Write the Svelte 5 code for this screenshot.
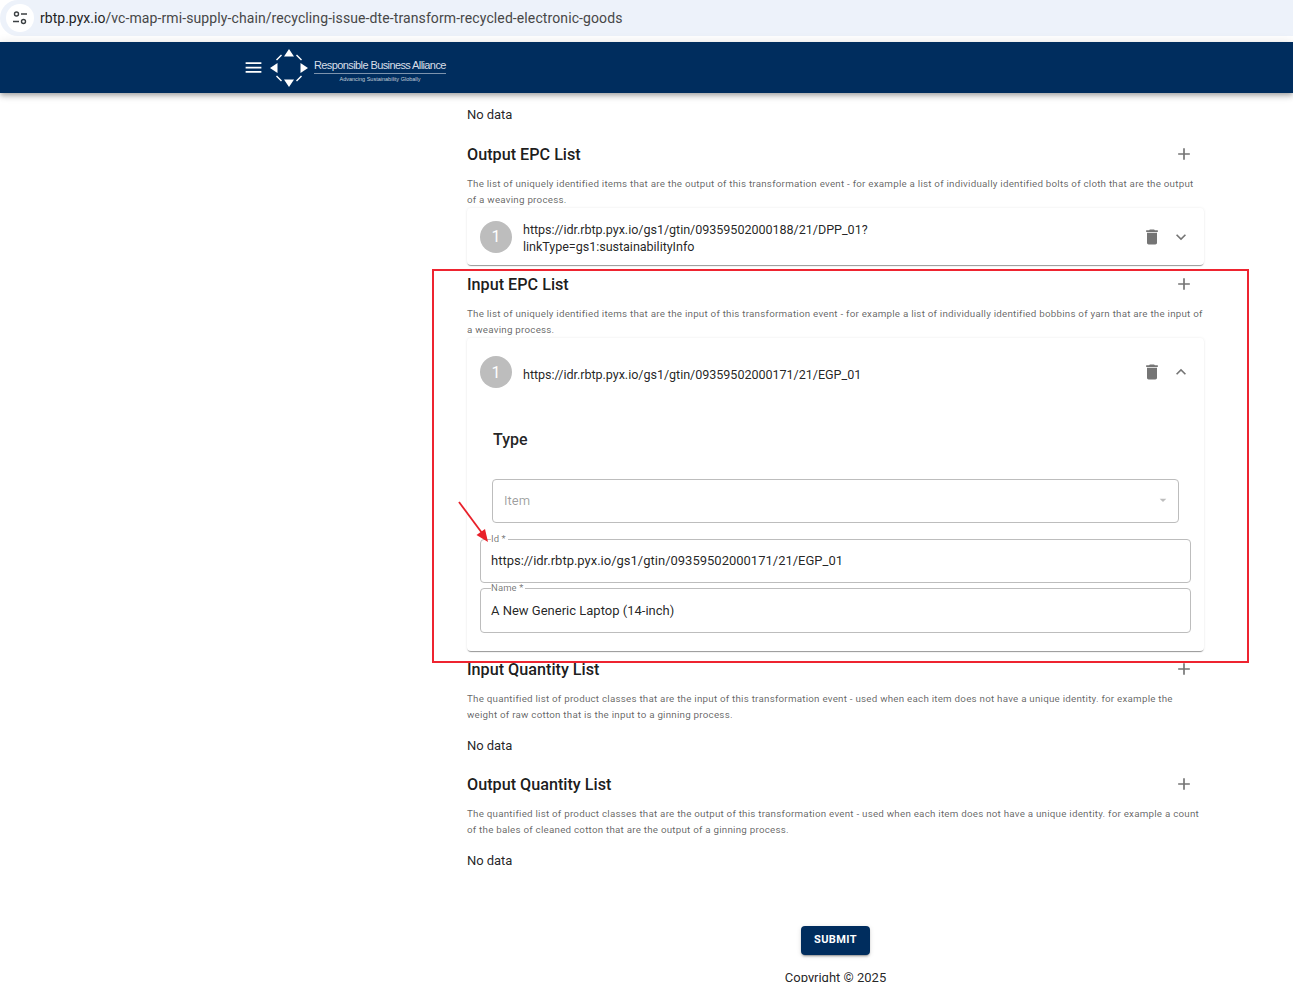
<script>
  const trash = "M6 19c0 1.1.9 2 2 2h8c1.1 0 2-.9 2-2V7H6v12zM19 4h-3.5l-1-1h-5l-1 1H5v2h14V4z";
  const plus = "M19 13h-6v6h-2v-6H5v-2h6V5h2v6h6v2z";
</script>

<div class="page">
  <div class="urlbar">
    <div class="tune">
      <svg width="16" height="16" viewBox="0 0 16 16" fill="none" stroke="#3c4043" stroke-width="1.4">
        <circle cx="4.5" cy="4" r="2"/><path d="M9 4h6M1 11.5h6"/><circle cx="11.5" cy="11.5" r="2"/>
      </svg>
    </div>
    <div class="url"><span class="host">rbtp.pyx.io</span><span class="path">/vc-map-rmi-supply-chain/recycling-issue-dte-transform-recycled-electronic-goods</span></div>
  </div>

  <header class="topbar">
    <svg class="menu" width="21" height="21" viewBox="0 0 24 24" fill="#fff"><path d="M3 18h18v-2H3v2zm0-5h18v-2H3v2zm0-7v2h18V6H3z"/></svg>
    <svg class="mark" width="40" height="40" viewBox="0 0 40 40" fill="#fff">
      <path d="M20 1l5 7.5H15zM20 39l-5-7.500h10zM1 20l7.500-5v10zM39 20l-7.500 5V15z"/>
      <path d="M7 11.500l5-5 1 1-5 5zM33 11.500l-5-5-1 1 5 5zM7 28.500l5 5 1-1-5-5zM33 28.500l-5 5-1-1 5-5z"/>
    </svg>
    <div class="brand">
      <div class="brand-name">Responsible Business Alliance</div>
      <div class="brand-tag">Advancing Sustainability Globally</div>
    </div>
  </header>

  <main class="content">
    <p class="nodata first">No data</p>

    <section class="sec output">
      <div class="sec-head">
        <h2>Output EPC List</h2>
        <svg class="add" viewBox="0 0 24 24"><path d={plus}/></svg>
      </div>
      <p class="desc">The list of uniquely identified items that are the output of this transformation event - for example a list of individually identified bolts of cloth that are the output of a weaving process.</p>
      <div class="card">
        <div class="row">
          <div class="num">1</div>
          <div class="row-text">https://idr.rbtp.pyx.io/gs1/gtin/09359502000188/21/DPP_01?<br/>linkType=gs1:sustainabilityInfo</div>
          <svg class="trash" viewBox="0 0 24 24"><path d={trash}/></svg>
          <svg class="chev" viewBox="0 0 24 24"><path d="M16.590 8.590 12 13.170 7.410 8.590 6 10l6 6 6-6z"/></svg>
        </div>
      </div>
    </section>

    <section class="sec input">
      <div class="sec-head">
        <h2>Input EPC List</h2>
        <svg class="add" viewBox="0 0 24 24"><path d={plus}/></svg>
      </div>
      <p class="desc">The list of uniquely identified items that are the input of this transformation event - for example a list of individually identified bobbins of yarn that are the input of a weaving process.</p>
      <div class="card open">
        <div class="row tall">
          <div class="num">1</div>
          <div class="row-text">https://idr.rbtp.pyx.io/gs1/gtin/09359502000171/21/EGP_01</div>
          <svg class="trash" viewBox="0 0 24 24"><path d={trash}/></svg>
          <svg class="chev" viewBox="0 0 24 24"><path d="M12 8l-6 6 1.410 1.410L12 10.830l4.590 4.580L18 14z"/></svg>
        </div>
        <div class="details">
          <h3>Type</h3>
          <div class="select">
            <span>Item</span>
            <svg viewBox="0 0 24 24"><path d="M7 10l5 5 5-5z"/></svg>
          </div>
          <fieldset class="field id">
            <legend>Id *</legend>
            <div class="value">https://idr.rbtp.pyx.io/gs1/gtin/09359502000171/21/EGP_01</div>
          </fieldset>
          <fieldset class="field name">
            <legend>Name *</legend>
            <div class="value">A New Generic Laptop (14-inch)</div>
          </fieldset>
        </div>
      </div>
    </section>

    <section class="sec qty-in">
      <div class="sec-head">
        <h2>Input Quantity List</h2>
        <svg class="add" viewBox="0 0 24 24"><path d={plus}/></svg>
      </div>
      <p class="desc">The quantified list of product classes that are the input of this transformation event - used when each item does not have a unique identity. for example the weight of raw cotton that is the input to a ginning process.</p>
      <p class="nodata">No data</p>
    </section>

    <section class="sec qty-out">
      <div class="sec-head">
        <h2>Output Quantity List</h2>
        <svg class="add" viewBox="0 0 24 24"><path d={plus}/></svg>
      </div>
      <p class="desc">The quantified list of product classes that are the output of this transformation event - used when each item does not have a unique identity. for example a count of the bales of cleaned cotton that are the output of a ginning process.</p>
      <p class="nodata">No data</p>
    </section>

    <div class="actions"><button>SUBMIT</button></div>
    <div class="copyright">Copyright © 2025</div>
  </main>

  <div class="red-box"></div>
  <svg class="arrow" width="40" height="50" viewBox="0 0 40 50">
    <path d="M2 2 L25 33" stroke="#e8202a" stroke-width="1.800" fill="none"/>
    <path d="M31 42 L19.500 35 L28 29 Z" fill="#e8202a"/>
  </svg>
</div>

<style>
  :global(body) { margin: 0; background: #fff; }
  .page {
    position: relative;
    height: 982px;
    overflow: hidden;
    font-family: Roboto, "Liberation Sans", sans-serif;
    color: rgba(0, 0, 0, 0.87);
  }
  .urlbar {
    height: 36px;
    margin-bottom: 6px;
    background: #edf2fa;
    border-radius: 18px 0 0 18px;
    display: flex;
    align-items: center;
    padding-left: 6px;
    box-sizing: border-box;
  }
  .tune {
    width: 28px;
    height: 28px;
    border-radius: 50%;
    background: #fff;
    display: flex;
    align-items: center;
    justify-content: center;
  }
  .url {
    margin-left: 6px;
    font-size: 14px;
    letter-spacing: 0.02px;
    color: #474747;
  }
  .host { color: #1f1f1f; }
  .path { letter-spacing: 0.1px; }
  .topbar {
    height: 51px;
    background: #002d5e;
    box-shadow: 0 2px 4px -1px rgba(0,0,0,.2), 0 4px 5px 0 rgba(0,0,0,.14), 0 1px 10px 0 rgba(0,0,0,.12);
    display: flex;
    align-items: center;
    padding-left: 243px;
    color: #fff;
  }
  .mark { margin-left: 5px; margin-top: 1px; }
  .brand { margin-left: 5px; width: 132px; margin-top: 5px; }
  .brand-name {
    font-family: "Liberation Sans", sans-serif;
    font-size: 11px;
    line-height: 14px;
    letter-spacing: -0.6px;
    color: #d8dfe8;
    border-bottom: 1px solid #7d93ad;
    padding-bottom: 1px;
    white-space: nowrap;
  }
  .brand-tag {
    font-family: "Liberation Sans", sans-serif;
    font-size: 5.500px;
    line-height: 7px;
    margin-top: 2px;
    text-align: center;
    color: #c3cdd9;
    white-space: nowrap;
  }
  .content {
    margin-left: 467px;
    width: 737px;
    display: flex;
    flex-direction: column;
  }
  .nodata {
    margin: 0;
    font-size: 13px;
    line-height: 20px;
    letter-spacing: -0.05px;
  }
  .nodata.first { margin-top: 12px; }
  .sec { display: flex; flex-direction: column; }
  .sec.output { margin-top: 14px; }
  .sec.input { margin-top: 4px; }
  .sec.qty-in { margin-top: 3px; }
  .sec.qty-out { margin-top: 13px; }
  .sec-head {
    height: 32px;
    display: flex;
    align-items: center;
    justify-content: space-between;
    flex: none;
  }
  h2 {
    margin: 0;
    font-size: 16.200px;
    font-weight: 500;
    line-height: 24px;
    color: rgba(0, 0, 0, 0.9);
  }
  .add { fill: #757575; margin: 0 10px 2px 0; width: 20px; height: 20px; }
  .desc {
    margin: 5px 0 0;
    font-size: 9.800px;
    line-height: 16px;
    letter-spacing: 0.225px;
    color: rgba(0, 0, 0, 0.62);
  }
  .sec.qty-in .nodata, .sec.qty-out .nodata { margin-top: 13px; }
  .card {
    border-radius: 4px;
    background: #fff;
    box-shadow: 0 2px 1px -1px rgba(0,0,0,.32), 0 1px 1px 0 rgba(0,0,0,.1), 0 0 3px 0 rgba(0,0,0,.08);
  }
  .row {
    height: 57px;
    display: flex;
    align-items: center;
    padding-left: 13px;
    box-sizing: border-box;
  }
  .row.tall { height: 66px; padding-top: 2px; }
  .num {
    width: 32px;
    height: 32px;
    flex: none;
    border-radius: 50%;
    background: #bdbdbd;
    color: #fff;
    font-size: 16px;
    display: flex;
    align-items: center;
    justify-content: center;
  }
  .row-text {
    flex: 1;
    margin-left: 11px;
    padding-top: 2px;
    font-size: 12.600px;
    line-height: 17px;
    letter-spacing: -0.05px;
    color: rgba(0, 0, 0, 0.87);
  }
  .row.tall .row-text { padding-top: 4px; }
  .trash { fill: #757575; flex: none; margin-right: 9px; width: 20px; height: 20px; }
  .chev { fill: #757575; flex: none; margin-right: 13px; width: 20px; height: 20px; }
  .details { padding: 0 13px 18px; }
  h3 {
    margin: 0;
    padding-left: 13px;
    padding-top: 24px;
    font-size: 16px;
    font-weight: 500;
    line-height: 24px;
    color: rgba(0, 0, 0, 0.87);
  }
  .select {
    margin: 27px 12px 0;
    height: 44px;
    border: 1px solid #bdbdbd;
    border-radius: 4px;
    box-sizing: border-box;
    display: flex;
    align-items: center;
    justify-content: space-between;
    padding: 0 7px 2px 11px;
    font-size: 13px;
    color: rgba(0, 0, 0, 0.38);
  }
  .select svg { fill: rgba(0, 0, 0, 0.26); width: 16px; height: 16px; }
  .field {
    margin: 0;
    padding: 0 10px;
    border: 1px solid #bdbdbd;
    border-radius: 4px;
    box-sizing: border-box;
    min-width: 0;
    display: block;
  }
  .field.id { margin-top: 10px; height: 50px; }
  .field.name { margin-top: -1px; height: 51px; }
  .field.name .value { margin-top: 7px; }
  legend {
    padding: 0 2px 0 0;
    font-size: 9.500px;
    line-height: 12px;
    letter-spacing: 0.1px;
    color: rgba(0, 0, 0, 0.55);
  }
  .value {
    font-size: 13px;
    line-height: 20px;
    margin-top: 6px;
    color: rgba(0, 0, 0, 0.87);
  }
  .actions {
    margin-top: 55px;
    display: flex;
    justify-content: center;
  }
  button {
    width: 69px;
    height: 29px;
    border: 0;
    border-radius: 4px;
    background: #002d5e;
    color: #fff;
    font-family: inherit;
    font-size: 11px;
    font-weight: 700;
    letter-spacing: 0.4px;
    box-shadow: 0 3px 1px -2px rgba(0,0,0,.2), 0 2px 2px 0 rgba(0,0,0,.14), 0 1px 5px 0 rgba(0,0,0,.12);
    padding: 0 0 2px;
  }
  .copyright {
    margin-top: 13px;
    text-align: center;
    font-size: 13px;
    line-height: 20px;
  }
  /* Annotation layered over the screenshot */
  .red-box {
    position: absolute;
    left: 432px;
    top: 269px;
    width: 817px;
    height: 394px;
    box-sizing: border-box;
    border: 2px solid #ee2430;
    pointer-events: none;
  }
  .arrow {
    position: absolute;
    left: 457px;
    top: 500px;
  }
</style>
